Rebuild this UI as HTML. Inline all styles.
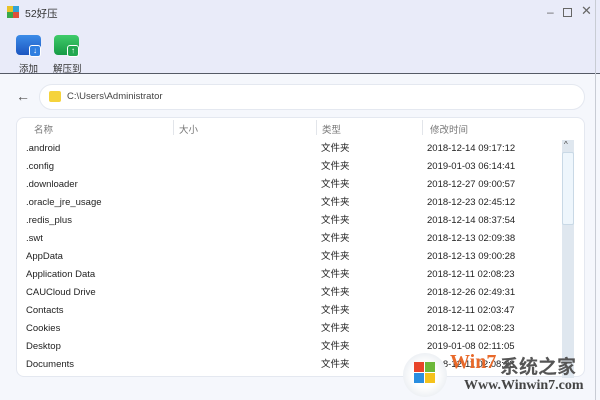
<!DOCTYPE html>
<html><head><meta charset="utf-8"><style>
*{margin:0;padding:0;box-sizing:border-box}
body{width:600px;height:400px;overflow:hidden;background:#f5f7fc;font-family:"Liberation Sans","Noto Sans CJK SC",sans-serif;font-size:10px;color:#222;position:relative}
.top{position:absolute;left:0;top:0;width:600px;height:74px;background:#e9ebf9;border-bottom:1px solid #555a66}
.abs{position:absolute;white-space:nowrap}
.panel{position:absolute;left:16px;top:117px;width:569px;height:260px;background:#fff;border:1px solid #e4e8f0;border-radius:8px}
.addr{position:absolute;left:39px;top:84px;width:546px;height:26px;background:#fff;border:1px solid #e4e8f0;border-radius:13px}
.hd{color:#777;font-size:9.5px}
.sep{position:absolute;top:120px;width:1px;height:15px;background:#e2e5ea}
</style></head><body>
<div class="top"></div>
<div class="abs" style="left:595px;top:0;width:1px;height:400px;background:#c8ccd4"></div>
<div class="abs" style="left:7px;top:6px;width:12px;height:12px;background:linear-gradient(90deg,#e8c22a 50%,#2fa3d8 50%)"></div>
<div class="abs" style="left:7px;top:12px;width:12px;height:6px;background:linear-gradient(90deg,#3aa84a 50%,#e0503a 50%)"></div>
<div class="abs" style="left:25px;top:6px;font-size:10.5px;color:#333">52好压</div>
<div class="abs" style="left:547px;top:5px;font-size:12px;color:#666">–</div>
<div class="abs" style="left:563px;top:8px;width:9px;height:9px;border:1px solid #666"></div>
<div class="abs" style="left:581px;top:3px;font-size:13px;color:#666">✕</div>
<div class="abs" style="left:16px;top:35px;width:25px;height:20px;border-radius:4px;background:linear-gradient(#3c8ce8,#1c55c0)"></div>
<div class="abs" style="left:29px;top:45px;width:12px;height:12px;border-radius:3px;background:#2f7ee0;border:1px solid #fff;color:#fff;font-size:8px;line-height:10px;text-align:center">↓</div>
<div class="abs" style="left:19px;top:61px;font-size:9.5px;color:#333">添加</div>
<div class="abs" style="left:54px;top:35px;width:25px;height:20px;border-radius:4px;background:linear-gradient(#3fcb6a,#169a45)"></div>
<div class="abs" style="left:67px;top:45px;width:12px;height:12px;border-radius:3px;background:#22a850;border:1px solid #fff;color:#fff;font-size:8px;line-height:10px;text-align:center">↑</div>
<div class="abs" style="left:53px;top:61px;font-size:9.5px;color:#333">解压到</div>
<div class="abs" style="left:16px;top:88px;font-size:14px;color:#555">←</div>
<div class="addr"></div>
<div class="abs" style="left:49px;top:91px;width:12px;height:11px;background:#f5d33c;border-radius:2px"></div>
<div class="abs" style="left:67px;top:91px;font-size:9.5px;color:#444">C:\Users\Administrator</div>
<div class="panel"></div>
<div class="abs hd" style="left:34px;top:122px">名称</div>
<div class="sep" style="left:173px"></div>
<div class="abs hd" style="left:179px;top:122px">大小</div>
<div class="sep" style="left:316px"></div>
<div class="abs hd" style="left:322px;top:122px">类型</div>
<div class="sep" style="left:422px"></div>
<div class="abs hd" style="left:430px;top:122px">修改时间</div>
<div class="abs" style="left:562px;top:140px;width:12px;height:238px;background:#dfe7ef"></div>
<div class="abs" style="left:562px;top:152px;width:12px;height:73px;background:#eef6fc;border:1px solid #c9d9e6;border-radius:2px"></div>
<div class="abs" style="left:564px;top:140px;font-size:8px;color:#444">^</div>
<div class="abs" style="left:26px;top:140px;line-height:18px;font-size:9.5px">.android<br>.config<br>.downloader<br>.oracle_jre_usage<br>.redis_plus<br>.swt<br>AppData<br>Application Data<br>CAUCloud Drive<br>Contacts<br>Cookies<br>Desktop<br>Documents</div>
<div class="abs" style="left:321px;top:140px;line-height:18px;font-size:9.5px">文件夹<br>文件夹<br>文件夹<br>文件夹<br>文件夹<br>文件夹<br>文件夹<br>文件夹<br>文件夹<br>文件夹<br>文件夹<br>文件夹<br>文件夹</div>
<div class="abs" style="left:427px;top:140px;line-height:18px;font-size:9.5px">2018-12-14 09:17:12<br>2019-01-03 06:14:41<br>2018-12-27 09:00:57<br>2018-12-23 02:45:12<br>2018-12-14 08:37:54<br>2018-12-13 02:09:38<br>2018-12-13 09:00:28<br>2018-12-11 02:08:23<br>2018-12-26 02:49:31<br>2018-12-11 02:03:47<br>2018-12-11 02:08:23<br>2019-01-08 02:11:05<br>2018-12-11 02:08:23</div>
<div class="abs" style="left:403px;top:353px;width:44px;height:44px;border-radius:50%;background:radial-gradient(#fff 40%,#dde3ea)"></div>
<div class="abs" style="left:414px;top:362px;width:10px;height:10px;background:#e8442a"></div>
<div class="abs" style="left:425px;top:362px;width:10px;height:10px;background:#6cb83a"></div>
<div class="abs" style="left:414px;top:373px;width:10px;height:10px;background:#2a8ee0"></div>
<div class="abs" style="left:425px;top:373px;width:10px;height:10px;background:#f5c21c"></div>
<div class="abs" style="left:450px;top:351px;font-size:20px;font-weight:bold;color:#e8692a;font-family:'Liberation Serif',serif">Win7</div>
<div class="abs" style="left:500px;top:352px;font-size:19px;font-weight:bold;color:#555;font-family:'Noto Sans CJK SC',sans-serif">系统之家</div>
<div class="abs" style="left:464px;top:378px;font-size:14px;font-weight:bold;color:#444;font-family:'Liberation Serif',serif">Www.Winwin7.com</div>
</body></html>
